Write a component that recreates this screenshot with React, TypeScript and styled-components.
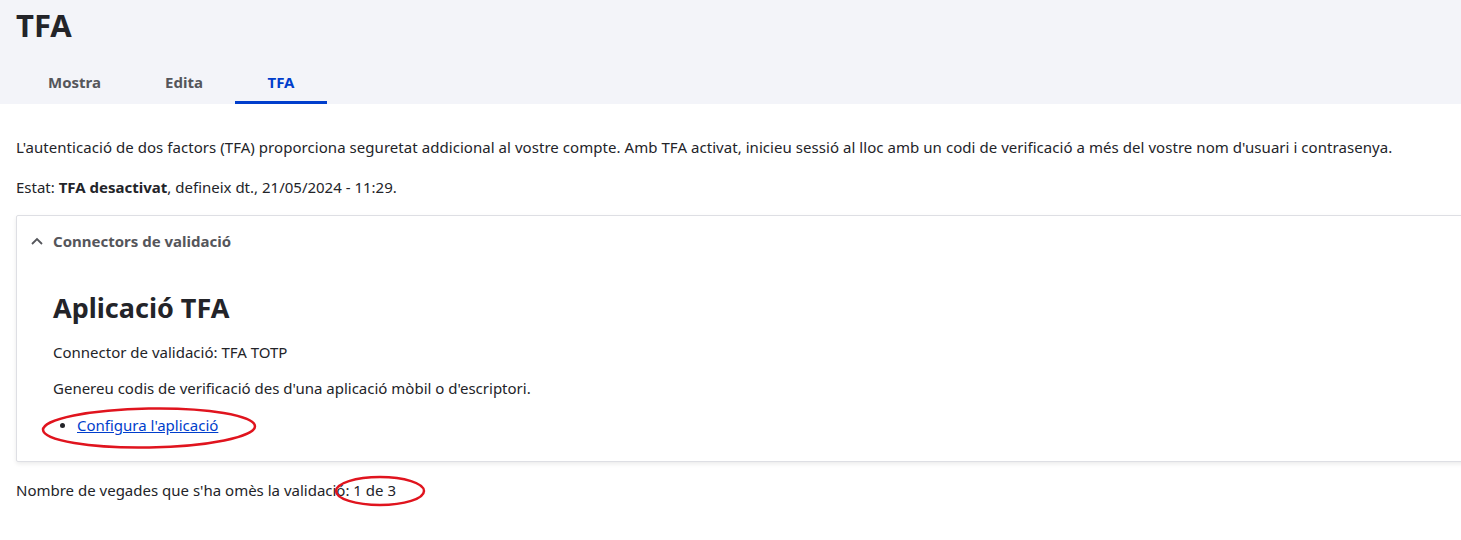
import React from "react"
import styled, { createGlobalStyle } from "styled-components"

const GlobalStyle = createGlobalStyle`
  html {
    overflow: hidden;
  }
  html, body {
    margin: 0;
    padding: 0;
    background: #fff;
  }
  body {
    font-family: "Noto Sans", "Liberation Sans", sans-serif;
    color: #232429;
    font-size: 15px;
    min-height: 540px;
  }
`;

const Header = styled.header`
  background: #f3f4f9;
  padding: 0 16px;
  height: 104px;
  display: flex;
  flex-direction: column;
`;

const Title = styled.h1`
  margin: 0;
  padding-top: 5px;
  font-size: 31px;
  line-height: 40px;
  font-weight: 700;
  color: #232429;
  height: 59px;
`;

const Tabs = styled.nav`
  display: flex;
  align-items: stretch;
  height: 45px;
`;

const Tab = styled.a<{ $active?: boolean }>`
  display: flex;
  align-items: center;
  justify-content: center;
  width: 92px;
  padding-top: 1px;
  font-size: 15px;
  font-weight: 700;
  color: ${(p) => (p.$active ? "#003ecc" : "#55565b")};
  border-bottom: 3px solid ${(p) => (p.$active ? "#003ecc" : "transparent")};
  text-decoration: none;
  box-sizing: border-box;
  &:first-child {
    width: 117px;
  }
  &:nth-child(2) {
    width: 102px;
  }
`;

const Main = styled.main`
  padding: 0 16px;
  position: relative;
`;

const Para = styled.p`
  margin: 0;
  line-height: 20px;
`;

const Intro = styled(Para)`
  padding-top: 33px;
  letter-spacing: 0.05px;
`;

const Status = styled(Para)`
  padding-top: 20px;
`;

const Card = styled.section`
  margin-top: 18px;
  margin-right: -40px;
  border: 1px solid #dedfe4;
  border-radius: 2px;
  box-shadow: 0 2px 4px rgba(0, 0, 0, 0.08);
  background: #fff;
  padding-bottom: 26px;
`;

const Summary = styled.div`
  display: flex;
  align-items: center;
  gap: 9px;
  height: 48px;
  padding-left: 13px;
  padding-top: 1px;
  font-weight: 700;
  color: #55565b;
`;

const CardBody = styled.div`
  padding: 0 36px;
`;

const AppTitle = styled.h2`
  margin: 25px 0 0;
  font-size: 27px;
  line-height: 36px;
  font-weight: 700;
  color: #232429;
`;

const BodyLine = styled(Para)`
  margin-top: 16px;
`;

const List = styled.ul`
  margin: 17px 0 0;
  padding-left: 24px;
  line-height: 20px;
  li::marker {
    font-size: 14px;
  }
`;

const Link = styled.a`
  color: #003ecc;
  text-decoration: underline;
`;

const Footer = styled(Para)`
  margin-top: 18px;
`;

const Annotation = styled.svg`
  position: absolute;
  pointer-events: none;
  overflow: visible;
`;

function Chevron() {
  return (
    <svg width="14" height="14" viewBox="0 0 14 14">
      <path d="M2 10 L7 5 L12 10" fill="none" stroke="#55565b" strokeWidth="1.8" />
    </svg>
  );
}

export default function App() {
  return (
    <>
      <GlobalStyle />
      <Header>
        <Title>TFA</Title>
        <Tabs>
          <Tab href="#">Mostra</Tab>
          <Tab href="#">Edita</Tab>
          <Tab href="#" $active>TFA</Tab>
        </Tabs>
      </Header>
      <Main>
        <Intro>
          L'autenticació de dos factors (TFA) proporciona seguretat addicional al vostre compte. Amb TFA activat, inicieu sessió al lloc amb un codi de verificació a més del vostre nom d'usuari i contrasenya.
        </Intro>
        <Status>
          Estat: <strong>TFA desactivat</strong>, defineix dt., 21/05/2024 - 11:29.
        </Status>
        <Card>
          <Summary>
            <Chevron />
            Connectors de validació
          </Summary>
          <CardBody>
            <AppTitle>Aplicació TFA</AppTitle>
            <BodyLine>Connector de validació: TFA TOTP</BodyLine>
            <BodyLine>Genereu codis de verificació des d'una aplicació mòbil o d'escriptori.</BodyLine>
            <List>
              <li>
                <Link href="#">Configura l'aplicació</Link>
              </li>
            </List>
          </CardBody>
        </Card>
        <Footer>Nombre de vegades que s'ha omès la validació: 1 de 3</Footer>
        <Annotation style={{ left: 42, top: 303 }} width="214" height="42">
          <ellipse cx="107" cy="21" rx="106" ry="19.5" fill="none" stroke="#e0141e" strokeWidth="2.5" transform="rotate(-1 107 21)" />
        </Annotation>
        <Annotation style={{ left: 335, top: 372 }} width="90" height="30">
          <ellipse cx="45" cy="15" rx="44" ry="14" fill="none" stroke="#e0141e" strokeWidth="2.5" />
        </Annotation>
      </Main>
    </>
  );
}
